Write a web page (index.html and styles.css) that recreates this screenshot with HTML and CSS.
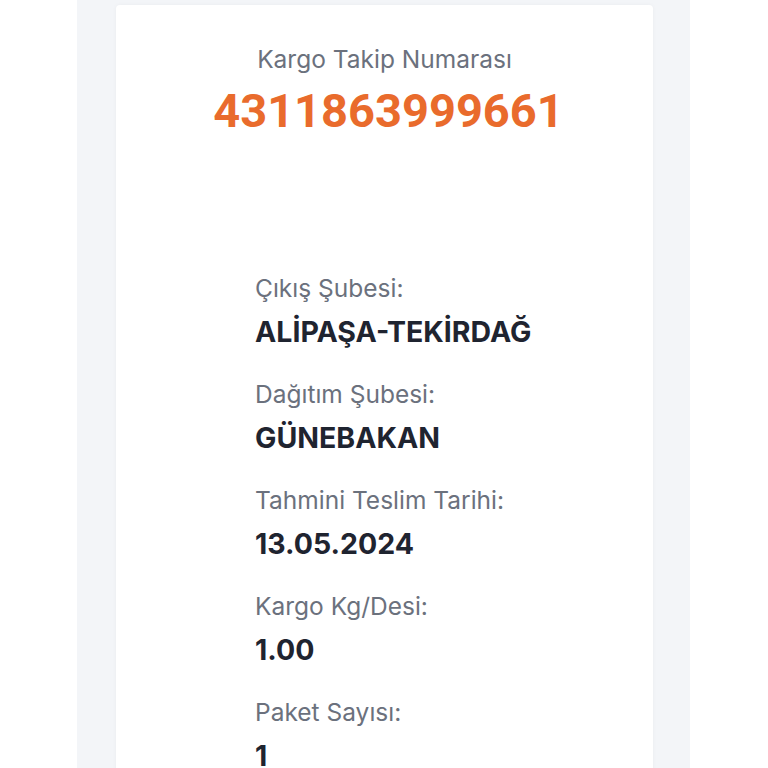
FILE: index.html
```html
<!DOCTYPE html>
<html lang="tr">

<head>
    <meta charset="UTF-8">
    <title>Kargo Takip</title>
    <link rel="stylesheet" href="styles.css">
</head>

<body>
    <div class="page">
        <div class="card">
            <div class="tracking">
                <div class="tracking-title">Kargo Takip Numarası</div>
                <div class="tracking-number">4311863999661</div>
            </div>

            <div class="details">
                <div class="row">
                    <div class="label">Çıkış Şubesi:</div>
                    <div class="value">ALİPAŞA-TEKİRDAĞ</div>
                </div>
                <div class="row">
                    <div class="label">Dağıtım Şubesi:</div>
                    <div class="value">GÜNEBAKAN</div>
                </div>
                <div class="row">
                    <div class="label">Tahmini Teslim Tarihi:</div>
                    <div class="value">13.05.2024</div>
                </div>
                <div class="row">
                    <div class="label">Kargo Kg/Desi:</div>
                    <div class="value">1.00</div>
                </div>
                <div class="row">
                    <div class="label">Paket Sayısı:</div>
                    <div class="value">1</div>
                </div>
            </div>
        </div>
    </div>
</body>

</html>
```

FILE: styles.css
```css
body {
    margin: 0;
    background-color: #ffffff;
    font-family: Inter, "Noto Sans", sans-serif;
}

.page {
    width: 613px;
    margin-left: 77px;
    min-height: 768px;
    padding-top: 5px;
    background-color: #f3f5f8;
    box-sizing: border-box;
}

.card {
    margin: 0 37px 0 39px;
    min-height: 763px;
    padding-top: 40px;
    background: white;
    border-radius: 4px 4px 0 0;
    box-shadow: 0px 0px 4px rgba(0, 0, 0, 0.04);
    box-sizing: border-box;
}

.tracking {
    text-align: center;
}

.tracking-title {
    font-size: 24.5px;
    line-height: 28px;
    color: #6b717d;
}

.tracking-number {
    margin-top: 10px;
    padding-left: 8px;
    font-family: Roboto, sans-serif;
    font-size: 47px;
    font-weight: 700;
    line-height: 56px;
    color: #e96b2c;
}

.details {
    margin-top: 134px;
    padding-left: 139px;
}

.row {
    margin-bottom: 29px;
}

.label {
    font-size: 24.5px;
    line-height: 30px;
    color: #6b717d;
}

.value {
    margin-top: 11px;
    font-size: 28.5px;
    font-weight: 650;
    line-height: 36px;
    color: #1f2430;
}
```
